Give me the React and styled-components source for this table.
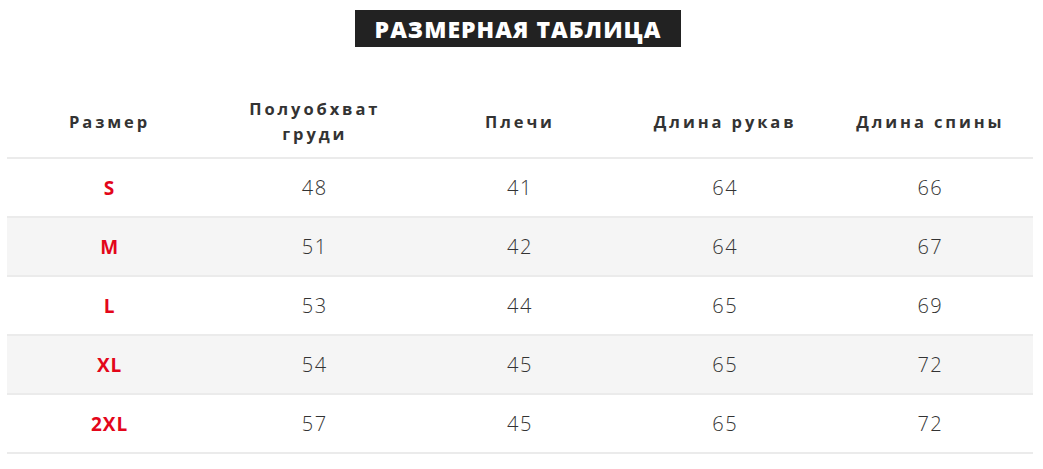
import React from 'react';
import styled, { createGlobalStyle } from 'styled-components';

const sizes = [
  { size: 'S', chest: 48, shoulders: 41, sleeve: 64, back: 66 },
  { size: 'M', chest: 51, shoulders: 42, sleeve: 64, back: 67 },
  { size: 'L', chest: 53, shoulders: 44, sleeve: 65, back: 69 },
  { size: 'XL', chest: 54, shoulders: 45, sleeve: 65, back: 72 },
  { size: '2XL', chest: 57, shoulders: 45, sleeve: 65, back: 72 },
];

const App = () => {
  return (
    <>
      <GlobalStyle />
      <Page>
        <Title>РАЗМЕРНАЯ ТАБЛИЦА</Title>
        <Table>
          <thead>
            <tr>
              <Th>Размер</Th>
              <Th>Полуобхват<br />груди</Th>
              <Th>Плечи</Th>
              <Th>Длина рукав</Th>
              <Th>Длина спины</Th>
            </tr>
          </thead>
          <tbody>
            {sizes.map((row, i) => (
              <Row key={row.size} $striped={i % 2 === 1}>
                <SizeCell>{row.size}</SizeCell>
                <Td>{row.chest}</Td>
                <Td>{row.shoulders}</Td>
                <Td>{row.sleeve}</Td>
                <Td>{row.back}</Td>
              </Row>
            ))}
          </tbody>
        </Table>
      </Page>
    </>
  );
};

const GlobalStyle = createGlobalStyle`
  body {
    margin: 0;
    background: #fff;
    font-family: "Open Sans", "DejaVu Sans", sans-serif;
  }
`;

const Page = styled.div`
  display: flex;
  flex-direction: column;
  align-items: center;
  padding: 10px 10px 0 7px;
`;

const Title = styled.h2`
  margin: 0 4px 38px 0;
  background: #222;
  color: #fff;
  height: 37px;
  width: 326px;
  display: flex;
  align-items: center;
  justify-content: center;
  font-size: 23px;
  font-weight: 800;
  letter-spacing: 1px;
`;

const Table = styled.table`
  width: 1026px;
  border-collapse: collapse;
  table-layout: fixed;
`;

const Th = styled.th`
  height: 72px;
  padding: 0;
  font-size: 16.5px;
  font-weight: 700;
  letter-spacing: 2.9px;
  line-height: 25px;
  color: #333;
  text-align: center;
  vertical-align: middle;
  border-bottom: 2px solid #ebebeb;
`;

const Row = styled.tr`
  background: ${(p) => (p.$striped ? '#f5f5f5' : '#fff')};
`;

const Td = styled.td`
  height: 57px;
  padding: 0;
  text-align: center;
  vertical-align: middle;
  font-size: 20px;
  font-weight: 300;
  letter-spacing: 1.5px;
  color: #333;
  border-bottom: 2px solid #ebebeb;
`;

const SizeCell = styled(Td)`
  color: #e3061a;
  font-weight: 700;
  font-size: 19px;
  letter-spacing: 1px;
`;

export default App;
